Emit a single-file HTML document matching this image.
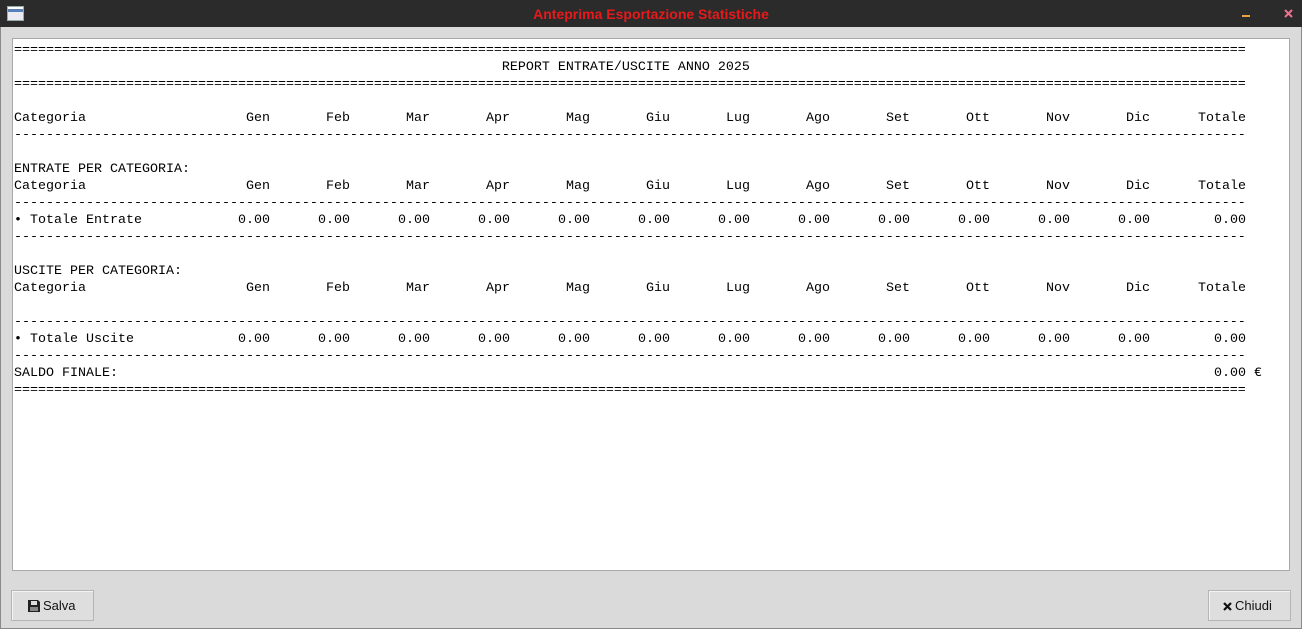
<!DOCTYPE html>
<html><head><meta charset="utf-8"><style>
body{margin:0;width:1302px;height:629px;overflow:hidden;background:#dadada;position:relative;font-family:"Liberation Sans",sans-serif}
#tb{position:absolute;left:0;top:0;width:1302px;height:27px;background:#2b2b2b}
#title{position:absolute;left:0;width:1302px;top:6px;text-align:center;color:#e8191a;font-weight:bold;font-size:14px}
#frame{position:absolute;left:0;top:27px;width:1300px;height:601px;border:1px solid #8a8a8a;border-top:none}
#ta{position:absolute;left:12px;top:38px;width:1276px;height:531px;background:#fff;border:1px solid #a9a9a9}
.r{position:absolute;left:14px;height:17px;line-height:17px;font-family:"Liberation Mono",monospace;font-size:13.33px;color:#000;white-space:pre;width:1260px}
.rule{width:1232px;overflow:hidden}
.c{position:absolute;width:80px;text-align:right;top:0}
.btn{position:absolute;top:590px;height:29px;border:1px solid #b5b5b5;background:#dedede;box-shadow:inset 1px 1px 0 #f4f4f4;font-size:13px;line-height:29px;color:#111}
</style></head><body>
<div id="tb">
<div style="position:absolute;left:7px;top:6px;width:15px;height:13px;background:linear-gradient(#fff 0,#fff 2px,#5a7fb8 2px,#5a7fb8 5px,#e8ecf2 5px);border:1px solid #9aa"></div>
<div id="title">Anteprima Esportazione Statistiche</div>
<div style="position:absolute;left:1242px;top:15px;width:8px;height:2px;background:#f0a040"></div>
<svg style="position:absolute;left:1284px;top:9px" width="9" height="9"><path d="M1 1L8 8M8 1L1 8" stroke="#f07090" stroke-width="2"/></svg>
</div>
<div id="frame"></div>
<div id="ta"></div>

<div class="r rule" style="top:42px">==========================================================================================================================================================================</div>
<div class="r" style="top:59px">                                                             REPORT ENTRATE/USCITE ANNO 2025</div>
<div class="r rule" style="top:76px">==========================================================================================================================================================================</div>

<div class="r" style="top:110px">Categoria<span class="c" style="left:176px">Gen</span><span class="c" style="left:256px">Feb</span><span class="c" style="left:336px">Mar</span><span class="c" style="left:416px">Apr</span><span class="c" style="left:496px">Mag</span><span class="c" style="left:576px">Giu</span><span class="c" style="left:656px">Lug</span><span class="c" style="left:736px">Ago</span><span class="c" style="left:816px">Set</span><span class="c" style="left:896px">Ott</span><span class="c" style="left:976px">Nov</span><span class="c" style="left:1056px">Dic</span><span class="c" style="left:1152px">Totale</span></div>
<div class="r rule" style="top:127px">--------------------------------------------------------------------------------------------------------------------------------------------------------------------------</div>

<div class="r" style="top:161px">ENTRATE PER CATEGORIA:</div>
<div class="r" style="top:178px">Categoria<span class="c" style="left:176px">Gen</span><span class="c" style="left:256px">Feb</span><span class="c" style="left:336px">Mar</span><span class="c" style="left:416px">Apr</span><span class="c" style="left:496px">Mag</span><span class="c" style="left:576px">Giu</span><span class="c" style="left:656px">Lug</span><span class="c" style="left:736px">Ago</span><span class="c" style="left:816px">Set</span><span class="c" style="left:896px">Ott</span><span class="c" style="left:976px">Nov</span><span class="c" style="left:1056px">Dic</span><span class="c" style="left:1152px">Totale</span></div>
<div class="r rule" style="top:195px">--------------------------------------------------------------------------------------------------------------------------------------------------------------------------</div>
<div class="r" style="top:212px">• Totale Entrate<span class="c" style="left:176px">0.00</span><span class="c" style="left:256px">0.00</span><span class="c" style="left:336px">0.00</span><span class="c" style="left:416px">0.00</span><span class="c" style="left:496px">0.00</span><span class="c" style="left:576px">0.00</span><span class="c" style="left:656px">0.00</span><span class="c" style="left:736px">0.00</span><span class="c" style="left:816px">0.00</span><span class="c" style="left:896px">0.00</span><span class="c" style="left:976px">0.00</span><span class="c" style="left:1056px">0.00</span><span class="c" style="left:1152px">0.00</span></div>
<div class="r rule" style="top:229px">--------------------------------------------------------------------------------------------------------------------------------------------------------------------------</div>

<div class="r" style="top:263px">USCITE PER CATEGORIA:</div>
<div class="r" style="top:280px">Categoria<span class="c" style="left:176px">Gen</span><span class="c" style="left:256px">Feb</span><span class="c" style="left:336px">Mar</span><span class="c" style="left:416px">Apr</span><span class="c" style="left:496px">Mag</span><span class="c" style="left:576px">Giu</span><span class="c" style="left:656px">Lug</span><span class="c" style="left:736px">Ago</span><span class="c" style="left:816px">Set</span><span class="c" style="left:896px">Ott</span><span class="c" style="left:976px">Nov</span><span class="c" style="left:1056px">Dic</span><span class="c" style="left:1152px">Totale</span></div>
<div class="r rule" style="top:314px">--------------------------------------------------------------------------------------------------------------------------------------------------------------------------</div>
<div class="r" style="top:331px">• Totale Uscite<span class="c" style="left:176px">0.00</span><span class="c" style="left:256px">0.00</span><span class="c" style="left:336px">0.00</span><span class="c" style="left:416px">0.00</span><span class="c" style="left:496px">0.00</span><span class="c" style="left:576px">0.00</span><span class="c" style="left:656px">0.00</span><span class="c" style="left:736px">0.00</span><span class="c" style="left:816px">0.00</span><span class="c" style="left:896px">0.00</span><span class="c" style="left:976px">0.00</span><span class="c" style="left:1056px">0.00</span><span class="c" style="left:1152px">0.00</span></div>
<div class="r rule" style="top:348px">--------------------------------------------------------------------------------------------------------------------------------------------------------------------------</div>
<div class="r" style="top:365px">SALDO FINALE:<span class="c" style="left:1152px">0.00</span><span style="position:absolute;left:1232px"> €</span></div>
<div class="r rule" style="top:382px">==========================================================================================================================================================================</div>

<div class="btn" style="left:11px;width:81px"><svg style="position:absolute;left:16px;top:9px" width="12" height="12" viewBox="0 0 12 12"><path d="M0 0H10L12 2V12H0Z" fill="#222"/><rect x="3" y="1" width="6" height="4" fill="#ddd"/><rect x="2" y="7" width="8" height="4" fill="#888"/></svg><span style="position:absolute;left:31px">Salva</span></div>
<div class="btn" style="left:1208px;width:81px"><svg style="position:absolute;left:14px;top:11px" width="9" height="9"><path d="M1 1L8 8M8 1L1 8" stroke="#111" stroke-width="2.2"/></svg><span style="position:absolute;left:26px">Chiudi</span></div>
</body></html>
